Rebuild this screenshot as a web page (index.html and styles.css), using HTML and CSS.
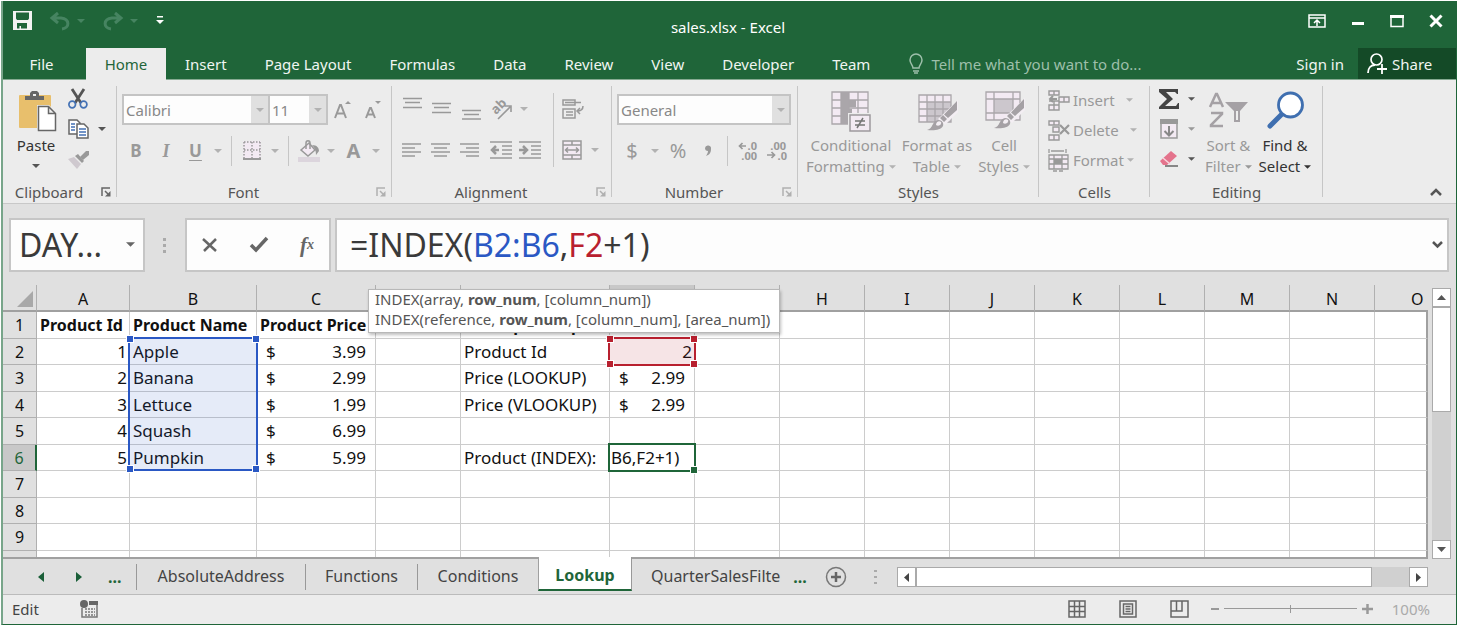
FILE: index.html
```html
<!DOCTYPE html>
<html lang="en">
<head>
<meta charset="utf-8">
<title>sales.xlsx - Excel</title>
<link rel="stylesheet" href="styles.css">
</head>
<body>
<svg class="defs" aria-hidden="true">
  <symbol id="caret" viewBox="0 0 8 4"><path d="M0 0h8L4 4z" fill="currentColor"/></symbol>
  <symbol id="launch" viewBox="0 0 10 10"><path d="M1 9V1h8M4 4l3 3" fill="none" stroke="currentColor" stroke-width="1.5"/><path d="M9.500 4v5.500H4z" fill="currentColor"/></symbol>
  <symbol id="brush" viewBox="0 0 32 32"><path d="M32 0v12L19 25l-7-6z" fill="#f3eef3"/><path d="M31 1v9l-9 8-4-3.500zM17 15l4 4-3 3-4-4z" fill="#a5a1a5"/><path d="M1 30c6-1 5-9 11-10 4 0 6 3 5 6-2 4-9 5-16 4z" fill="#a5a1a5"/><path d="M10 25c0-3 3-5 5-3 1 2-2 5-5 3z" fill="#f3eef3"/></symbol>
</svg>
<div class="window">
  <header class="titlebar">
    <div class="quick">
      <button class="btn save" aria-label="Save"><svg width="19" height="19" viewBox="0 0 19 19"><path fill="#f3f3f3" fill-rule="evenodd" d="M0 0h19v19H0zM3 1.500v6l1 1.500h11l1-1.500v-6zM4 12v5.500h2.500V15H8v2.500h6V12z"/></svg></button>
      <button class="btn undo" aria-label="Undo"><svg width="20" height="18" viewBox="0 0 20 18"><path d="M8 1L2 6l6 5M2 6h9c9 1 9 10 1 11" fill="none" stroke="#468461" stroke-width="3"/></svg></button>
      <button class="btn" aria-label="Undo list"><svg width="8" height="4"><use href="#caret"/></svg></button>
      <button class="btn redo" aria-label="Redo"><svg width="20" height="18" viewBox="0 0 20 18"><path d="M12 1l6 5-6 5M18 6H9C0 7 0 16 8 17" fill="none" stroke="#468461" stroke-width="3"/></svg></button>
      <button class="btn" aria-label="Redo list"><svg width="8" height="4"><use href="#caret"/></svg></button>
      <button class="btn custom" aria-label="Customize toolbar"><svg width="8" height="9" viewBox="0 0 8 9"><path d="M1 0h6v1.500H1zM0 4h8L4 8z" fill="#fff"/></svg></button>
    </div>
    <h1 class="title">sales.xlsx - Excel</h1>
    <div class="controls">
      <button class="btn" aria-label="Ribbon options"><svg width="18" height="14" viewBox="0 0 18 14"><path d="M1 1h16v12H1zM1 4h16M9 12V6M6 9l3-3 3 3" fill="none" stroke="#fff" stroke-width="1.500"/></svg></button>
      <button class="btn" aria-label="Minimize"><svg width="14" height="14"><path d="M1 8h12v3H1z" fill="#fff"/></svg></button>
      <button class="btn" aria-label="Maximize"><svg width="14" height="14"><path d="M1 2.500h12v10H1z" fill="none" stroke="#fff" stroke-width="1.500"/><path d="M0 1h14v3H0z" fill="#fff"/></svg></button>
      <button class="btn" aria-label="Close"><svg width="14" height="14"><path d="M1.500 1.500l11 11M12.500 1.500l-11 11" stroke="#fff" stroke-width="3"/></svg></button>
    </div>
  </header>

  <nav class="tabs">
    <button class="tab file">File</button>
    <button class="tab active">Home</button>
    <button class="tab">Insert</button>
    <button class="tab">Page Layout</button>
    <button class="tab">Formulas</button>
    <button class="tab">Data</button>
    <button class="tab">Review</button>
    <button class="tab">View</button>
    <button class="tab">Developer</button>
    <button class="tab">Team</button>
    <button class="tell"><svg width="14" height="20" viewBox="0 0 14 20"><path d="M4 14c0-3-3-4-3-8a6 6 0 0 1 12 0c0 4-3 5-3 8zM4 17h6M5 19h4" fill="none" stroke="currentColor" stroke-width="1.500"/></svg>Tell me what you want to do...</button>
    <button class="signin">Sign in</button>
    <button class="share"><svg width="20" height="21" viewBox="0 0 20 21"><circle cx="9.500" cy="6.500" r="5.500" fill="none" stroke="#fff" stroke-width="1.700"/><path d="M1 20c0-5 3-8 7-8M10 16h10M15 11v10" fill="none" stroke="#fff" stroke-width="1.800"/></svg>Share</button>
  </nav>

  <section class="ribbon">
    <div class="group clipboard">
      <div class="body">
        <button class="big dark paste">
          <svg width="38" height="41" viewBox="0 0 38 41"><rect y="4" width="32" height="33" rx="1" fill="#e8bf6c"/><path d="M6 9V5h5V2l2-2h5l2 2v3h5v4z" fill="#666"/><rect x="14" y="3" width="3" height="2" fill="#eee"/><path d="M18 14h12l8 8v19H18z" fill="#eee"/><path d="M19.500 15.500h10l7 7v17h-17zM29.500 15.500v7h7" fill="#fff" stroke="#666" stroke-width="1.500"/></svg>
          <span>Paste</span><svg width="8" height="4"><use href="#caret"/></svg>
        </button>
        <div class="stack">
          <button class="btn dark" aria-label="Cut"><svg width="20" height="20" viewBox="0 0 20 20"><path d="M4 0l9 14M16 0L7 14" stroke="#555" stroke-width="2.800"/><circle cx="4.200" cy="15.500" r="3.300" fill="none" stroke="#4472b5" stroke-width="1.700"/><circle cx="15.600" cy="15.500" r="3.300" fill="none" stroke="#4472b5" stroke-width="1.700"/></svg></button>
          <button class="btn dark copy" aria-label="Copy"><svg width="21" height="20" viewBox="0 0 21 20"><path d="M1 1h8l3 3v11H1z" fill="#fff" stroke="#666" stroke-width="1.500"/><path d="M3 5h4M3 8h4M3 11h4" stroke="#4472b5" stroke-width="1.500"/><path d="M9 5h7l4 4v10H9z" fill="#fff" stroke="#666" stroke-width="1.500"/><path d="M11 10h7M11 13h7M11 16h7" stroke="#4472b5" stroke-width="1.500"/></svg><svg width="8" height="4"><use href="#caret"/></svg></button>
          <button class="btn" aria-label="Format painter"><svg width="21" height="19" viewBox="0 0 21 19"><path d="M0 9l6-2 7 7-4 5z" fill="#cfc9cf"/><path d="M7 6l3-2 6 7-2 2z" fill="#999"/><path d="M12 7l6-6 3 0v4l-6 5z" fill="#999"/></svg></button>
        </div>
      </div>
      <footer><span>Clipboard</span><button class="btn launch dark" aria-label="Clipboard settings"><svg width="10" height="10"><use href="#launch"/></svg></button></footer>
    </div>

    <div class="group font">
      <div class="body rows">
        <div class="row">
          <label class="combo family"><select aria-label="Font"><option>Calibri</option></select><span><svg width="8" height="4"><use href="#caret"/></svg></span></label>
          <label class="combo size"><select aria-label="Font size"><option>11</option></select><span><svg width="8" height="4"><use href="#caret"/></svg></span></label>
          <button class="btn w30" aria-label="Increase font size"><svg width="18" height="19" viewBox="0 0 18 19"><path d="M1 18L6 5h1l5 13M3 13.500h7" fill="none" stroke="currentColor" stroke-width="2"/><path d="M11 4l3-3 3 3z" fill="currentColor"/></svg></button>
          <button class="btn w30" aria-label="Decrease font size"><svg width="18" height="19" viewBox="0 0 18 19"><path d="M2 18L6 8h1l4 10M3 14.500h7" fill="none" stroke="currentColor" stroke-width="2"/><path d="M11 1l3 3 3-3z" fill="currentColor"/></svg></button>
        </div>
        <div class="row">
          <button class="btn w30 bold">B</button><button class="btn w30 italic">I</button><button class="btn w28 under">U</button><button class="btn w18" aria-label="Underline list"><svg width="8" height="4"><use href="#caret"/></svg></button>
          <i class="sep"></i>
          <button class="btn w30" aria-label="Borders"><svg width="18" height="19" viewBox="0 0 18 19"><path d="M0 0h18v18H0z" fill="#f3eaf3"/><path d="M1 1h16M1 9h16M1 1v16M9 1v16M17 1v16" stroke="#999" stroke-width="1.500" stroke-dasharray="1.500 1.500"/><path d="M0 18h18" stroke="#999" stroke-width="2"/></svg></button><button class="btn w18" aria-label="Borders list"><svg width="8" height="4"><use href="#caret"/></svg></button>
          <i class="sep"></i>
          <button class="btn w28" aria-label="Fill colour"><svg width="22" height="22" viewBox="0 0 22 22"><path d="M0 17h22v5H0z" fill="#dcd5dd"/><path d="M3 10l8-7 6 7-7 6z" fill="#f3eaf3" stroke="#999" stroke-width="1.500"/><path d="M8 9V3c0-3 4-3 4 0v6" fill="none" stroke="#999" stroke-width="1.500"/><path d="M14 5c5 0 7 3 7 6l-3 4c0-4-1-7-4-10z" fill="#999"/></svg></button><button class="btn w18" aria-label="Fill list"><svg width="8" height="4"><use href="#caret"/></svg></button>
          <button class="btn w28 color">A</button><button class="btn w18" aria-label="Font colour list"><svg width="8" height="4"><use href="#caret"/></svg></button>
        </div>
      </div>
      <footer><span>Font</span><button class="btn launch" aria-label="Font settings"><svg width="10" height="10"><use href="#launch"/></svg></button></footer>
    </div>

    <div class="group alignment">
      <div class="body">
        <div class="rows">
          <div class="row">
            <button class="btn w30" aria-label="Top align"><svg width="19" height="22" viewBox="0 0 19 22"><path d="M0 .5h19M2 4.500h15M0 9.500h19" stroke="currentColor" stroke-width="1.300"/></svg></button>
            <button class="btn w28" aria-label="Middle align"><svg width="19" height="22" viewBox="0 0 19 22"><path d="M0 5.500h19M2 9.500h15M0 14.500h19" stroke="currentColor" stroke-width="1.300"/></svg></button>
            <button class="btn w30" aria-label="Bottom align"><svg width="19" height="22" viewBox="0 0 19 22"><path d="M0 12.500h19M2 16.500h15M0 21h19" stroke="currentColor" stroke-width="1.300"/></svg></button>
            <button class="btn w30" aria-label="Orientation"><svg width="24" height="22" viewBox="0 0 24 22"><text transform="translate(7 17) rotate(-45)" class="ab">ab</text><path d="M9 21L21 9M16 8h6v6" fill="none" stroke="currentColor" stroke-width="1.600"/></svg></button>
            <button class="btn w18" aria-label="Orientation list"><svg width="8" height="4"><use href="#caret"/></svg></button>
          </div>
          <div class="row">
            <button class="btn w30" aria-label="Align left"><svg width="19" height="14"><path d="M0 1h19M0 5h13M0 9h19M0 13h13" stroke="currentColor" stroke-width="1.500"/></svg></button>
            <button class="btn w28" aria-label="Center"><svg width="19" height="14"><path d="M0 1h19M3 5h13M0 9h19M3 13h13" stroke="currentColor" stroke-width="1.500"/></svg></button>
            <button class="btn w30" aria-label="Align right"><svg width="19" height="14"><path d="M0 1h19M6 5h13M0 9h19M6 13h13" stroke="currentColor" stroke-width="1.500"/></svg></button>
            <button class="btn w30 indent" aria-label="Decrease indent"><svg width="22" height="18" viewBox="0 0 22 18"><path d="M0 1h22M12 5h10M12 9h10M12 13h10M0 17h22" stroke="currentColor" stroke-width="1.500"/><path d="M9 9H2M6 5L2 9l4 4" fill="none" stroke="currentColor" stroke-width="2.500"/></svg></button>
            <button class="btn w30" aria-label="Increase indent"><svg width="22" height="18" viewBox="0 0 22 18"><path d="M0 1h22M12 5h10M12 9h10M12 13h10M0 17h22" stroke="currentColor" stroke-width="1.500"/><path d="M0 9h8M4 5l4 4-4 4" fill="none" stroke="currentColor" stroke-width="2.500"/></svg></button>
          </div>
        </div>
        <i class="sep tall"></i>
        <div class="rows wrapcol">
          <div class="row"><button class="btn" aria-label="Wrap text"><svg width="22" height="20" viewBox="0 0 22 20"><path d="M1 1h12v5H1zM1 10h12v9H1zM3 3.500h16M4 13h7M4 16h7M21 7c0 4-2 5-6 5M18 9l-3 3 3 3" fill="none" stroke="currentColor" stroke-width="1.500"/></svg></button></div>
          <div class="row"><button class="btn merge" aria-label="Merge and center"><svg width="20" height="20" viewBox="0 0 20 20"><path d="M1 1h18v18H1z" fill="#f3eaf3"/><path d="M1 1h18v18H1zM1 5h18M1 15h18M10 1v4M10 15v4M4 10h12M6 7.500L3.500 10 6 12.500M14 7.500l2.500 2.500-2.500 2.500" fill="none" stroke="#999" stroke-width="1.500"/></svg><svg width="8" height="4"><use href="#caret"/></svg></button></div>
        </div>
      </div>
      <footer><span>Alignment</span><button class="btn launch" aria-label="Alignment settings"><svg width="10" height="10"><use href="#launch"/></svg></button></footer>
    </div>

    <div class="group number">
      <div class="body rows">
        <div class="row"><label class="combo format"><select aria-label="Number format"><option>General</option></select><span><svg width="8" height="4"><use href="#caret"/></svg></span></label></div>
        <div class="row">
          <button class="btn w30 sym">$</button><button class="btn w18" aria-label="Currency list"><svg width="8" height="4"><use href="#caret"/></svg></button><button class="btn w30 sym">%</button><button class="btn w28" aria-label="Comma style"><svg width="8" height="12"><path d="M1 3a3 3 0 1 1 6 1c0 4-2 6-5 7 1-2 2-3 2-5-2 0-3-1-3-3z" fill="currentColor"/></svg></button>
          <i class="sep"></i>
          <button class="btn w28 dec" aria-label="Increase decimal"><svg width="20" height="20" viewBox="0 0 20 20"><path d="M8 5H2M4.500 2l-3 3 3 3" fill="none" stroke="currentColor" stroke-width="1.700"/><text x="19" y="9" text-anchor="end">.0</text><text x="19" y="19" text-anchor="end">.00</text></svg></button>
          <button class="btn w28 dec" aria-label="Decrease decimal"><svg width="20" height="20" viewBox="0 0 20 20"><path d="M0 14h7M4.500 11l3 3-3 3" fill="none" stroke="currentColor" stroke-width="1.700"/><text x="19" y="9" text-anchor="end">.00</text><text x="20" y="19" text-anchor="end">.0</text></svg></button>
        </div>
      </div>
      <footer><span>Number</span><button class="btn launch" aria-label="Number settings"><svg width="10" height="10"><use href="#launch"/></svg></button></footer>
    </div>

    <div class="group styles">
      <div class="body">
        <button class="big"><svg width="40" height="41" viewBox="0 0 40 41"><path d="M1 1h36v32H1z" fill="#f3eaf3"/><path d="M10 1h8v32h-8zM10 9h15v7H10zM10 18h11v6H10z" fill="#aaa6aa"/><path d="M1 1h36v32H1zM10 1v32M18 1v32M27 1v32M1 9h36M1 17h36M1 25h36" fill="none" stroke="#aaa6aa" stroke-width="1.300"/><path d="M17 22h23v19H17z" fill="#ececec"/><path d="M19 24h20v16H19z" fill="#f3eaf3" stroke="#9d999d" stroke-width="1.500"/><path d="M24 30h10M24 34h10M32 27l-6 10" stroke="#777" stroke-width="1.500"/></svg><span>Conditional</span><span>Formatting<svg width="7" height="4"><use href="#caret"/></svg></span></button>
        <button class="big"><svg width="40" height="41" viewBox="0 0 40 41"><path d="M2 4h32v27H2z" fill="#f3eaf3"/><path d="M10 11h24v20H10z" fill="#ccc7cd"/><path d="M2 4h32v27H2zM10 4v27M18 4v27M26 4v27M2 11h32M2 18h32M2 25h32" fill="none" stroke="#aaa6aa" stroke-width="1.300"/><use href="#brush" x="9" y="9" width="32" height="32"/></svg><span>Format as</span><span>Table<svg width="7" height="4"><use href="#caret"/></svg></span></button>
        <button class="big"><svg width="40" height="41" viewBox="0 0 40 41"><path d="M2 1h34v28H2z" fill="#f3eaf3"/><path d="M10 8h19v14H10z" fill="#ccc7cd"/><path d="M2 1h34v28H2zM10 1v28M29 1v28M2 8h34M2 22h34" fill="none" stroke="#aaa6aa" stroke-width="1.300"/><use href="#brush" x="9" y="7" width="32" height="32"/></svg><span>Cell</span><span>Styles<svg width="7" height="4"><use href="#caret"/></svg></span></button>
      </div>
      <footer><span>Styles</span></footer>
    </div>

    <div class="group cells">
      <div class="body list">
        <button class="line"><svg width="22" height="21" viewBox="0 0 22 21"><path d="M1 1h5v4H1zM6 1h5v4H6zM1 15h5v5H1zM6 15h5v5H6zM1 11h5v4M6 11h5v4M11 7h10v5H11zM16 7v5" fill="#f3eaf3" stroke="currentColor" stroke-width="1.400"/><path d="M9 9H2M5 6L2 9l3 3" fill="none" stroke="currentColor" stroke-width="2"/></svg>Insert<svg class="c1" width="7" height="4"><use href="#caret"/></svg></button>
        <button class="line"><svg width="22" height="21" viewBox="0 0 22 21"><path d="M1 1h5v4H1zM6 1h5v4H6zM5 7h6v5H5zM1 15h5v5H1zM6 15h5v5H6z" fill="#f3eaf3" stroke="currentColor" stroke-width="1.400"/><path d="M12 5l9 9M21 5l-9 9" stroke="currentColor" stroke-width="2.200"/></svg>Delete<svg class="c1" width="7" height="4"><use href="#caret"/></svg></button>
        <button class="line"><svg width="22" height="23" viewBox="0 0 22 23"><path d="M1 0v4M18 0v4M3 2h13" stroke="currentColor" stroke-width="1.300"/><path d="M1 6h19v14H1z" fill="#f3eaf3"/><path d="M1 6h19v14H1zM1 10h19M1 15h19M6 6v14M14 6v14M5 22h4M11 22h4" fill="none" stroke="currentColor" stroke-width="1.300"/><path d="M6 10h8v5H6z" fill="currentColor"/></svg>Format<svg width="7" height="4"><use href="#caret"/></svg></button>
      </div>
      <footer><span>Cells</span></footer>
    </div>

    <div class="group editing">
      <div class="body">
        <div class="stack">
          <button class="btn dark" aria-label="AutoSum"><svg width="20" height="20" viewBox="0 0 20 20"><path d="M0 0h19v5h-1l-2-2H7l7 7-8 7h11l2-3h1v6H0v-2l8-8-8-7z" fill="#444"/></svg><svg width="7" height="4"><use href="#caret"/></svg></button>
          <button class="btn" aria-label="Fill"><svg width="20" height="20" viewBox="0 0 20 20"><path d="M2 1h16v18H2z" fill="#f3eaf3" stroke="currentColor" stroke-width="1.500"/><path d="M1 0h18v5H1z" fill="currentColor"/><path d="M10 7v9M5.500 12l4.500 4.500 4.500-4.500" fill="none" stroke="#888" stroke-width="2"/></svg><svg width="7" height="4"><use href="#caret"/></svg></button>
          <button class="btn dark" aria-label="Clear"><svg width="20" height="18" viewBox="0 0 20 18"><path d="M1 11L12 1l6 5L8 15H4z" fill="#e4738c"/><path d="M4 8l7 6" stroke="#f7d5dd" stroke-width="1.500"/><path d="M6 16h13" stroke="#666" stroke-width="1.500"/></svg><svg width="7" height="4"><use href="#caret"/></svg></button>
        </div>
        <button class="big"><svg width="40" height="41" viewBox="0 0 40 41"><path d="M2 16L8 3h1l6 13M4 12h9M3 22h11v1L3 34v1h12" fill="none" stroke="#a5a1a5" stroke-width="2.500"/><path d="M17 11h23l-8 9v11h-6V20z" fill="#a5a1a5"/><path d="M28 20h2v9h-2z" fill="#eee"/></svg><span>Sort &amp;</span><span>Filter<svg width="7" height="4"><use href="#caret"/></svg></span></button>
        <button class="big dark"><svg width="40" height="41" viewBox="0 0 40 41"><path d="M5 35l13-13" stroke="#3f6fb0" stroke-width="5" stroke-linecap="round"/><circle cx="25.500" cy="14" r="12" fill="#fff" stroke="#3f6fb0" stroke-width="2.800"/></svg><span>Find &amp;</span><span>Select<svg width="7" height="4"><use href="#caret"/></svg></span></button>
      </div>
      <footer><span>Editing</span></footer>
    </div>
    <button class="btn collapse" aria-label="Collapse ribbon"><svg width="12" height="8"><path d="M1 7l5-5 5 5" fill="none" stroke="#555" stroke-width="2.500"/></svg></button>
  </section>

  <section class="formula">
    <div class="box namebox"><input aria-label="Name box" value="DAY..."><button class="btn" aria-label="Name list"><svg width="9" height="5"><use href="#caret"/></svg></button></div>
    <svg class="grip" width="4" height="16"><path d="M0 1h3v3H0zM0 7h3v3H0zM0 13h3v3H0z" fill="#aaa"/></svg>
    <div class="box actions">
      <button class="btn" aria-label="Cancel"><svg width="16" height="14"><path d="M1 1l13 12M14 1L2 13" stroke="#666" stroke-width="2.500"/></svg></button>
      <button class="btn" aria-label="Enter"><svg width="18" height="15"><path d="M1 8l5 5L17 1" fill="none" stroke="#666" stroke-width="3.500"/></svg></button>
      <button class="btn fx" aria-label="Insert function">f<sub>x</sub></button>
    </div>
    <div class="box entry"><div class="expr" role="textbox" aria-label="Formula" contenteditable="true" spellcheck="false">=INDEX(<span class="blue">B2:B6</span>,<span class="red">F2</span>+1)</div><button class="btn" aria-label="Expand formula bar"><svg width="11" height="8"><path d="M1 1l4.500 4.500L10 1" fill="none" stroke="#555" stroke-width="2.500"/></svg></button></div>
  </section>

  <main class="sheet">
    <div class="gridwrap">
      <table class="grid">
        <colgroup><col class="c34"><col class="c93"><col class="c127"><col class="c119"><col class="c85"><col class="c149"><col class="c85"><col class="c85"><col class="c85"><col class="c85"><col class="c85"><col class="c85"><col class="c85"><col class="c85"><col class="c85"><col></colgroup>
        <thead><tr><th class="corner"><svg width="16" height="16"><path d="M16 0v16H0z" fill="#a8a8a8"/></svg></th><th>A</th><th>B</th><th>C</th><th>D</th><th>E</th><th class="on">F</th><th>G</th><th>H</th><th>I</th><th>J</th><th>K</th><th>L</th><th>M</th><th>N</th><th class="last">O</th></tr></thead>
        <tbody>
          <tr><th>1</th><td><b>Product Id</b></td><td><b>Product Name</b></td><td><b>Product Price</b></td><td></td><td><b>Lookup Example</b></td><td></td><td></td><td></td><td></td><td></td><td></td><td></td><td></td><td></td><td></td></tr>
          <tr><th>2</th><td class="num">1</td><td class="anchor">Apple<div class="range"><i></i><i></i><i></i><i></i></div></td><td><div class="money"><span>$</span><span>3.99</span></div></td><td></td><td>Product Id</td><td class="num anchor">2<div class="range ref"><i></i><i></i><i></i><i></i></div></td><td></td><td></td><td></td><td></td><td></td><td></td><td></td><td></td><td></td></tr>
          <tr><th>3</th><td class="num">2</td><td>Banana</td><td><div class="money"><span>$</span><span>2.99</span></div></td><td></td><td>Price (LOOKUP)</td><td><div class="money"><span>$</span><span>2.99</span></div></td><td></td><td></td><td></td><td></td><td></td><td></td><td></td><td></td><td></td></tr>
          <tr><th>4</th><td class="num">3</td><td>Lettuce</td><td><div class="money"><span>$</span><span>1.99</span></div></td><td></td><td>Price (VLOOKUP)</td><td><div class="money"><span>$</span><span>2.99</span></div></td><td></td><td></td><td></td><td></td><td></td><td></td><td></td><td></td><td></td></tr>
          <tr><th>5</th><td class="num">4</td><td>Squash</td><td><div class="money"><span>$</span><span>6.99</span></div></td><td></td><td></td><td></td><td></td><td></td><td></td><td></td><td></td><td></td><td></td><td></td><td></td></tr>
          <tr><th class="on">6</th><td class="num">5</td><td>Pumpkin</td><td><div class="money"><span>$</span><span>5.99</span></div></td><td></td><td>Product (INDEX):</td><td class="anchor edit">B6,F2+1)<div class="cursor"><i></i></div></td><td></td><td></td><td></td><td></td><td></td><td></td><td></td><td></td><td></td></tr>
          <tr><th>7</th><td></td><td></td><td></td><td></td><td></td><td></td><td></td><td></td><td></td><td></td><td></td><td></td><td></td><td></td><td></td></tr>
          <tr><th>8</th><td></td><td></td><td></td><td></td><td></td><td></td><td></td><td></td><td></td><td></td><td></td><td></td><td></td><td></td><td></td></tr>
          <tr><th>9</th><td></td><td></td><td></td><td></td><td></td><td></td><td></td><td></td><td></td><td></td><td></td><td></td><td></td><td></td><td></td></tr>
          <tr class="cut"><th></th><td></td><td></td><td></td><td></td><td></td><td></td><td></td><td></td><td></td><td></td><td></td><td></td><td></td><td></td><td></td></tr>
        </tbody>
      </table>
      <div class="hint"><p>INDEX(array, <b>row_num</b>, [column_num])</p><p>INDEX(reference, <b>row_num</b>, [column_num], [area_num])</p></div>
    </div>
    <div class="vscroll"><button class="arrow" aria-label="Scroll up"><svg width="9" height="5"><path d="M0 5h9L4.500 0z" fill="#555"/></svg></button><div class="thumb"></div><div class="space"></div><button class="arrow" aria-label="Scroll down"><svg width="9" height="5"><path d="M0 0h9L4.500 5z" fill="#555"/></svg></button></div>
  </main>

  <nav class="sheets">
    <div class="nav">
      <button class="btn" aria-label="Previous sheet"><svg width="6" height="10"><path d="M6 0v10L0 5z" fill="#1a5f38"/></svg></button>
      <button class="btn" aria-label="Next sheet"><svg width="6" height="10"><path d="M0 0v10l6-5z" fill="#1a5f38"/></svg></button>
      <button class="btn more">...</button>
    </div>
    <button class="leaf w170">AbsoluteAddress</button>
    <button class="leaf w112">Functions</button>
    <button class="leaf w120">Conditions</button>
    <button class="leaf current">Lookup</button>
    <button class="leaf tail">QuarterSalesFilte</button>
    <button class="btn more dots">...</button>
    <button class="btn add" aria-label="New sheet"><svg width="22" height="22"><circle cx="11" cy="11" r="9.500" fill="none" stroke="#777" stroke-width="1.500"/><path d="M6 11h10M11 6v10" stroke="#666" stroke-width="2.500"/></svg></button>
    <svg class="grip" width="4" height="16"><path d="M0 1h3v2H0zM0 7h3v2H0zM0 13h3v2H0z" fill="#aaa"/></svg>
    <div class="hscroll"><button class="arrow" aria-label="Scroll left"><svg width="5" height="9"><path d="M5 0v9L0 4.500z" fill="#444"/></svg></button><div class="thumb"></div><div class="space"></div><button class="arrow" aria-label="Scroll right"><svg width="5" height="9"><path d="M0 0v9l5-4.500z" fill="#444"/></svg></button></div>
  </nav>

  <footer class="status">
    <span>Edit</span>
    <button class="btn" aria-label="Record macro"><svg width="18" height="18" viewBox="0 0 18 18"><path d="M2 8v9h15V2H9" fill="none" stroke="#777" stroke-width="1.500"/><path d="M9 1h9v4H9z" fill="#666"/><circle cx="4" cy="4" r="4" fill="#666"/><path d="M5 9h10M5 12h10M5 15h10" stroke="#777" stroke-width="1.500" stroke-dasharray="2 1"/></svg></button>
    <div class="views">
      <button class="btn" aria-label="Normal view"><svg width="18" height="18"><path d="M1 1h16v16H1zM6.500 1v16M11.500 1v16M1 6.500h16M1 11.500h16" fill="none" stroke="#666" stroke-width="1.500"/></svg></button>
      <button class="btn" aria-label="Page layout view"><svg width="18" height="18"><path d="M1 1h16v16H1zM4.500 4h9v10h-9zM6.500 6.500h5M6.500 9h5M6.500 11.500h5" fill="none" stroke="#666" stroke-width="1.500"/></svg></button>
      <button class="btn" aria-label="Page break view"><svg width="19" height="18"><path d="M1 1h17v16H1zM1 11h11V1M6.500 1v10" fill="none" stroke="#666" stroke-width="1.500"/></svg></button>
    </div>
    <button class="btn" aria-label="Zoom out"><svg width="8" height="10"><path d="M0 5h8" stroke="#999" stroke-width="2"/></svg></button>
    <input class="zoom" type="range" min="0" max="200" value="100" aria-label="Zoom">
    <button class="btn" aria-label="Zoom in"><svg width="11" height="10"><path d="M0 5h11M5.500 0v10" stroke="#999" stroke-width="2.500"/></svg></button>
    <span class="pct">100%</span>
  </footer>
</div>
</body>
</html>
```
FILE: styles.css
```css
* { box-sizing: border-box; }
body { margin: 0; padding: 1px; background: #fff; font: 15px/20px "Noto Sans", "Open Sans", sans-serif; color: #444; }
button, select, input { font: inherit; color: inherit; border: 0; padding: 0; margin: 0; background: none; }
button { display: flex; align-items: center; justify-content: center; white-space: nowrap; }
svg { display: block; flex: none; overflow: visible; }
.defs { position: absolute; width: 0; height: 0; overflow: hidden; }
.window { border: 1px solid #1f6539; border-top: 0; border-left-color: #78a58a; border-left-width: 2px; background: #e0e0e0; }

.titlebar { display: grid; grid-template-columns: 1fr auto 1fr; align-items: center; height: 47px; background: #1f6539; color: #fff; padding: 0 13px 8px 10px; }
.quick { display: flex; align-items: center; color: #468461; }
.undo { margin-left: 18px; margin-right: 7px; }
.redo { margin-left: 18px; margin-right: 7px; }
.custom { margin-left: 18px; }
.title { margin: 12px 0 0; font-size: 15px; font-weight: 400; line-height: 20px; }
.controls { display: flex; justify-content: flex-end; gap: 25px; }

.tabs { display: flex; height: 32px; background: #1f6539; color: #f0f5f1; border-bottom: 1px solid #86aa92; }
.tab { padding: 0 19px; }
.file { width: 83px; padding: 0 6px 0 0; }
.tab.active { width: 80px; background: #ececec; color: #1f6539; margin-bottom: -1px; }
.tell { gap: 8px; padding-left: 20px; color: #9dbfaa; }
.signin { margin-left: auto; padding: 0 14px; }
.share { width: 98px; justify-content: flex-start; padding-left: 9px; gap: 5px; background: #144a27; }

.ribbon { display: flex; height: 124px; background: #ececec; border-bottom: 1px solid #c8c8c8; color: #999; }
.group { position: relative; display: flex; flex-direction: column; flex: none; }
.group::after { content: ""; position: absolute; top: 6px; bottom: 6px; right: 0; width: 1px; background: #c6c6c6; }
.group footer { display: flex; align-items: center; height: 22px; color: #555; }
.group footer span { flex: 1; text-align: center; }
.launch { width: 22px; height: 20px; color: #b0b0b0; }
.body { display: flex; height: 101px; }
.dark { color: #555; }
.launch.dark { color: #666; }
.clipboard { width: 114px; }
.font { width: 275px; }
.alignment { width: 220px; }
.number { width: 186px; }
.styles { width: 241px; }
.cells { width: 111px; }
.editing { width: 173px; }
.rows { display: flex; flex-direction: column; padding-top: 9px; }
.row { display: flex; align-items: center; height: 41px; }
.font .row { padding-left: 4px; }
.font .row:first-child { padding-left: 5px; }
.alignment .body { padding-left: 5px; }
.alignment .rows { padding-top: 8px; }
.number .row { padding-left: 5px; }
.w18 { width: 16px; height: 30px; }
.w28 { width: 29px; height: 30px; }
.w30 { width: 30px; height: 30px; }
.w18, .combo span, .merge, .line svg:last-child, .styles span svg { color: #b2b2b2; }
.sep { width: 1px; height: 30px; margin: 0 5px; background: #c6c6c6; }
.sep.tall { height: 74px; margin: 13px 8px 0 8px; }
.alignment .rows:first-child { width: 148px; }
.indent { margin-left: 2px; }
.merge { gap: 9px; }
.combo { display: flex; height: 31px; border: 2px solid #c4c4c4; background: #fdfdfd; }
.combo select { flex: 1; min-width: 0; appearance: none; padding-left: 2px; color: #888; }
.combo span { display: flex; align-items: center; justify-content: center; width: 17px; background: #e0e0e0; }
.family { width: 148px; }
.size { width: 58px; border-left: 0; }
.format { width: 174px; }
.bold, .under, .color { font-weight: 700; font-size: 17px; }
.under { text-decoration: underline; text-underline-offset: 3px; }
.italic { font: italic 700 18px/20px "Liberation Serif", serif; }
.color { font-size: 20px; }
.sym { font-size: 20px; }
.ab { font: 700 13px "Noto Sans", sans-serif; fill: currentColor; }
.dec text { font: 700 11px "Noto Sans", sans-serif; fill: currentColor; }

.big { flex-direction: column; justify-content: flex-start; padding-top: 11px; line-height: 21px; }
.big > svg:first-child { margin-bottom: 3px; }
.big span { display: flex; align-items: center; gap: 4px; }
.paste { width: 40px; margin-left: 13px; }
.paste span { color: #333; margin-bottom: 8px; }
.paste > svg:first-child { margin-left: 4px; }
.stack { display: flex; flex-direction: column; padding-top: 4px; }
.stack .btn { height: 30px; justify-content: flex-start; gap: 9px; }
.clipboard .stack { margin-left: 12px; }
.styles .body { padding-left: 8px; gap: 6px; }
.list { flex-direction: column; padding: 5px 0 0 9px; }
.line { height: 30px; justify-content: flex-start; gap: 3px; }
.line .c1 { margin-left: 8px; }
.editing .stack { margin: 0 10px 0 9px; }
.editing .body .big { margin-right: 7px; }
.editing .big.dark span { color: #333; }
.collapse { margin: auto 14px 7px auto; }

.formula { display: flex; align-items: center; height: 81px; padding: 0 7px 0 6px; }
.box { display: flex; align-items: center; height: 54px; background: #fdfdfd; border: 2px solid #c6c6c6; font-size: 32px; line-height: 44px; color: #3a3a3a; }
.namebox { width: 136px; padding-right: 8px; }
.namebox input { flex: 1; min-width: 0; padding-left: 8px; }
.namebox .btn, .entry .btn { color: #666; }
.formula .grip { margin: 0 18px; }
.actions { width: 146px; justify-content: space-between; padding: 0 15px; color: #666; }
.fx { font: italic 700 21px/24px "Liberation Serif", serif; color: #666; }
.fx sub { font-size: 14px; vertical-align: baseline; }
.entry { flex: 1; margin-left: 4px; padding: 0 4px 0 13px; }
.expr { flex: 1; outline: 0; }
.blue { color: #2a58c4; }
.red { color: #b8202f; }

.sheet { display: flex; padding-right: 5px; }
.gridwrap { position: relative; flex: 1; min-width: 0; }
.grid { width: 100%; table-layout: fixed; border-collapse: separate; border-spacing: 0; font-size: 17px; line-height: 22px; color: #111; border-bottom: 2px solid #a0a0a0; }
.c34 { width: 34px; }
.c93 { width: 93px; }
.c127 { width: 127px; }
.c119 { width: 119px; }
.c85 { width: 85px; }
.c149 { width: 149px; }
.grid tr { height: 27px; }
.grid tbody tr:nth-child(even) { height: 26px; }
.grid th { padding: 0; font-weight: 400; font-size: 16px; border-right: 1px solid #b0b0b0; border-bottom: 1px solid #b0b0b0; }
.grid thead th { height: 27px; padding-top: 2px; border-bottom: 2px solid #a0a0a0; }
.grid .corner svg { margin-left: 14px; }
.grid thead th.last { text-align: left; padding-left: 36px; border-right: 0; }
.grid .on { background: #c8c8c8; color: #1f6539; }
.grid tbody th.on { border-right: 2px solid #1f6539; }
.grid td { padding: 0 0 0 3px; background: #fff; border-right: 1px solid #ccc; border-bottom: 1px solid #ccc; white-space: nowrap; overflow: hidden; }
.grid td:last-child { border-right: 2px solid #a0a0a0; }
.grid b { font-size: 16px; }
.grid .num { text-align: right; padding-right: 2px; }
.grid .anchor { position: relative; overflow: visible; }
.grid td.edit { padding-left: 1px; }
.grid tbody tr.cut { height: 6px; }
.cut td, .cut th { border-bottom: 0; }
.money { display: flex; justify-content: space-between; padding: 0 9px 0 6px; }
.range { position: absolute; left: -2px; top: -2px; width: 130px; height: 134px; border: 2px solid #2a58c4; background: rgba(42, 88, 196, 0.12); color: #2a58c4; }
.range i { position: absolute; width: 8px; height: 8px; background: currentColor; border: 1px solid #fff; }
.range i:nth-child(1) { left: -4px; top: -4px; }
.range i:nth-child(2) { right: -4px; top: -4px; }
.range i:nth-child(3) { left: -4px; bottom: -4px; }
.range i:nth-child(4) { right: -4px; bottom: -4px; }
.range.ref { width: 88px; height: 29px; border-color: #b8202f; background: rgba(184, 32, 47, 0.12); color: #b8202f; }
.cursor { position: absolute; left: -2px; top: -2px; width: 88px; height: 29px; border: 2px solid #1f6539; }
.cursor i { position: absolute; right: -4px; bottom: -4px; width: 8px; height: 8px; background: #1f6539; border: 1px solid #fff; }
.hint { position: absolute; left: 365px; top: 4px; padding: 0 9px 3px 6px; background: #fff; border: 1px solid #b8b8b8; box-shadow: 1px 2px 3px rgba(0, 0, 0, 0.25); line-height: 20px; white-space: nowrap; color: #555; }
.hint p { margin: 0; }
.hint p:first-child { line-height: 19px; }
.vscroll { display: flex; flex-direction: column; width: 19px; margin: 3px 0 0 4px; background: #d0d0d0; }
.arrow { width: 19px; height: 19px; border: 1px solid #aaa; background: #fff; }
.thumb { background: #fff; border: 1px solid #aaa; }
.space { flex: 1; }
.vscroll .thumb { height: 105px; }

.sheets { display: flex; height: 36px; font-size: 16px; border-bottom: 1px solid #bbb; }
.nav { display: flex; align-items: center; gap: 32px; width: 134px; padding-left: 35px; border-right: 1px solid #999; height: 26px; margin-top: 5px; }
.nav .more { margin-left: -6px; }
.more { font-weight: 700; color: #1f6539; }
.leaf { height: 26px; margin-top: 5px; padding-bottom: 3px; border-right: 1px solid #999; }
.w170 { width: 169px; }
.w112 { width: 112px; }
.w120 { width: 120px; border-right: 0; }
.leaf.current { width: 94px; height: 34px; margin-top: -2px; padding: 4px 0 0; background: #fff; border-left: 1px solid #a0a0a0; border-bottom: 2px solid #1f6539; color: #1f6539; font-weight: 700; position: relative; }
.leaf.tail { border: 0; padding-left: 19px; }
.dots { margin: 0 18px 0 13px; }
.sheets .grip { margin: 10px 19px 0 27px; }
.hscroll { display: flex; flex: 1; height: 20px; margin: 8px 28px 0 0; background: #d0d0d0; }
.hscroll .thumb { flex: 1; }
.hscroll .space { flex: none; width: 37px; }
.hscroll .arrow { height: 20px; }

.status { display: flex; align-items: center; height: 29px; padding: 0 26px 2px 9px; background: #ececec; }
.status > span:first-child { margin-right: 41px; }
.views { display: flex; gap: 33px; margin: 0 22px 0 auto; }
.zoom { appearance: none; width: 133px; height: 10px; margin: 0 5px; background: linear-gradient(#999, #999) center / 100% 1px no-repeat; }
.zoom::-webkit-slider-thumb { appearance: none; width: 1px; height: 8px; background: #999; }
.pct { margin-left: 19px; color: #aaa; }
```
